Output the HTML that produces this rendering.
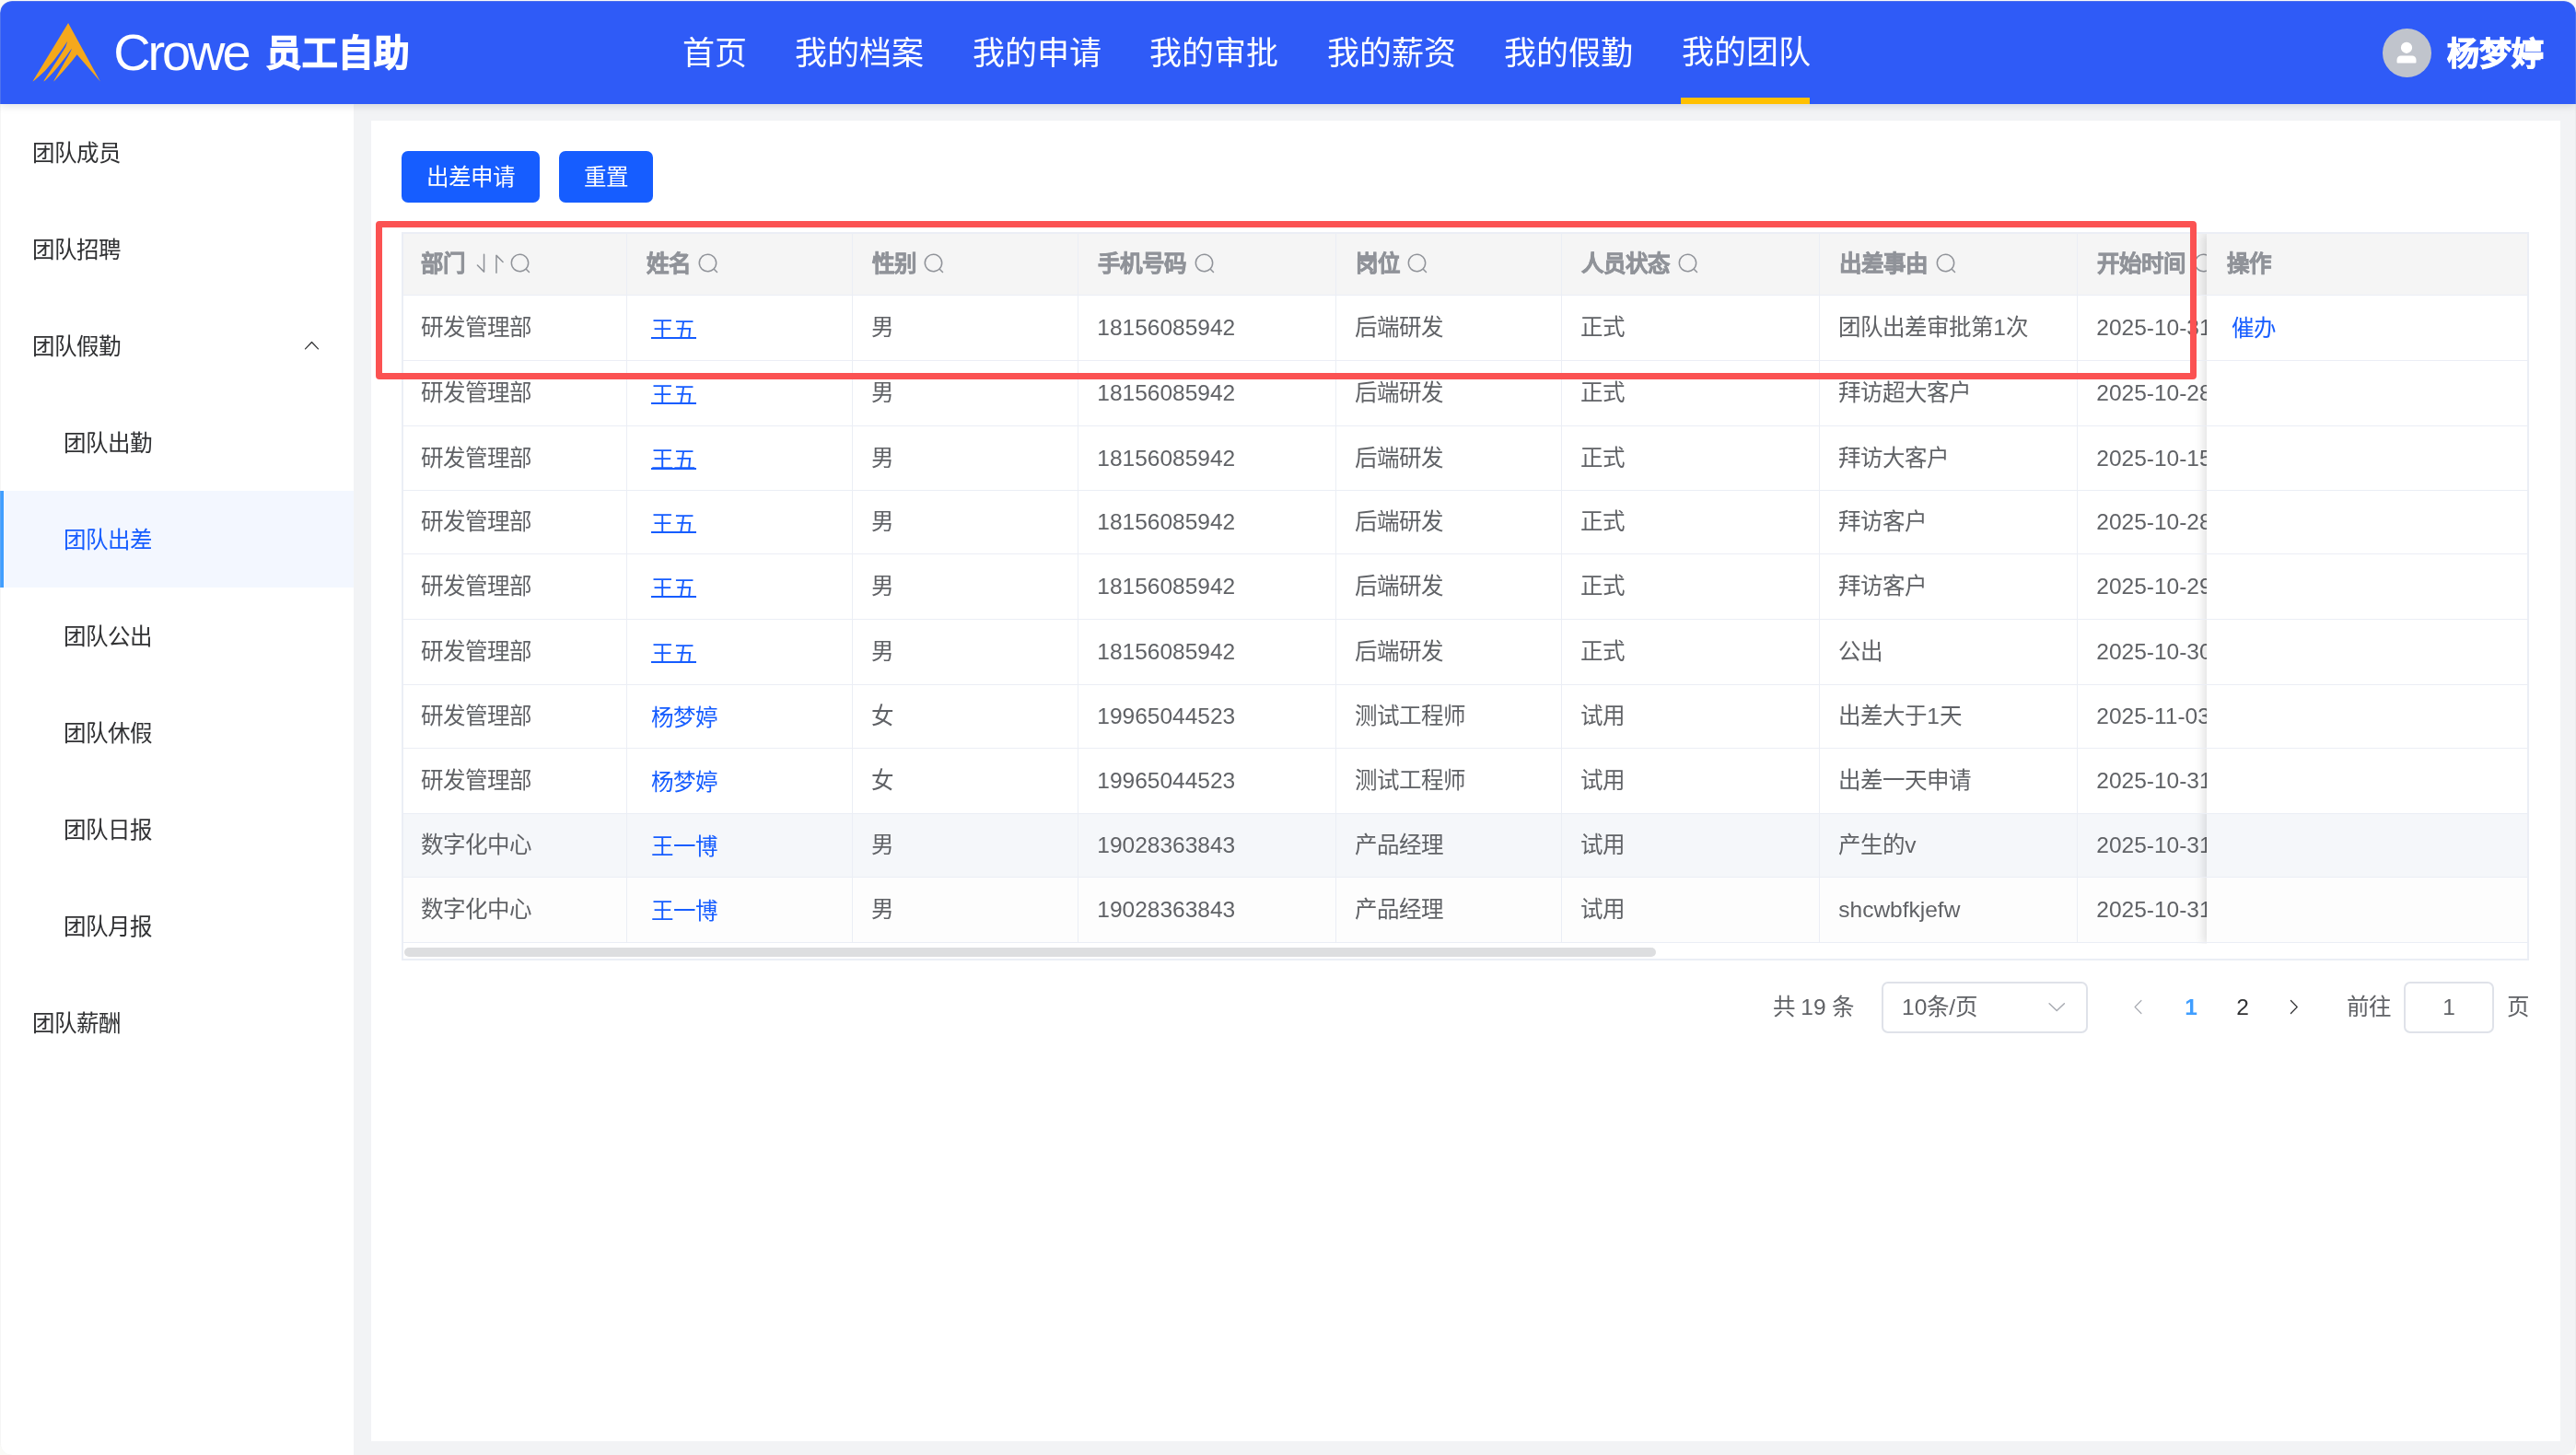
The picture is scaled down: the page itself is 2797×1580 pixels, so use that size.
<!DOCTYPE html>
<html lang="zh-CN">
<head>
<meta charset="utf-8">
<title>员工自助 - 团队出差</title>
<style>
html,body{margin:0;padding:0;background:#fafaf7;}
body{width:2797px;height:1580px;overflow:hidden;position:relative;font-family:"Liberation Sans",sans-serif;color:#606266;}
*{box-sizing:border-box;}
#app{will-change:transform;opacity:.9999;position:absolute;left:0;top:0;width:2797px;height:1580px;background:#f2f3f5;border-radius:13px;overflow:hidden;clip-path:inset(1px 0 0 0 round 13px);}
#edge{position:absolute;left:0;top:1px;width:2797px;height:1580px;border-radius:13px;box-shadow:inset 0 0 0 1px rgba(205,205,205,.2);z-index:100;pointer-events:none;}
.abs{position:absolute;}
.ic{position:absolute;display:block;overflow:visible;}
.t{position:absolute;white-space:nowrap;line-height:1;}
#hdr{position:absolute;left:0;top:0;width:2797px;height:113px;background:#2f5bf7;z-index:20;box-shadow:0 2px 9px rgba(0,21,41,.13);}
#hdr .nav{position:absolute;top:0;height:113px;font-size:35px;line-height:115px;color:#fff;white-space:nowrap;}
#side{position:absolute;left:0;top:113px;width:384px;height:1467px;background:#fff;z-index:5;}
.mi{position:absolute;left:0;width:384px;height:105px;line-height:107px;font-size:24.5px;color:#303133;white-space:nowrap;}
.mi.sub{padding-left:69px;}
.mi.top{padding-left:34.5px;}
.mi.act{background:#f3f7ff;color:#165dff;}
.mi.act:before{content:"";position:absolute;left:0;top:0;width:4px;height:105px;background:#409eff;}
#panel{position:absolute;left:403px;top:131px;width:2377px;height:1434px;background:#fff;}
.btn{position:absolute;top:164px;height:56px;border-radius:7px;background:#165dff;color:#fff;font-size:24.5px;line-height:58px;text-align:center;}
.hl{position:absolute;height:2px;background:#ebeef5;}
.hl.in{height:1px;}
.vl{position:absolute;width:2px;background:#ebeef5;}
.vl.in{width:1px;}
.c{position:absolute;font-size:24.5px;white-space:nowrap;color:#606266;}
.h{position:absolute;font-size:24.5px;font-weight:bold;white-space:nowrap;color:#909399;-webkit-text-stroke:.6px #909399;}
.lk{color:#165dff;}
.ul{position:absolute;height:2px;background:#165dff;}
.pg{position:absolute;font-size:24.5px;white-space:nowrap;line-height:56px;top:1066px;height:56px;color:#606266;}
.box{position:absolute;top:1066px;height:56px;border:2px solid #dfe2e9;border-radius:7px;background:#fff;}
</style>
</head>
<body>
<div id="app">

<div id="hdr">
<svg class="ic" style="left:30px;top:20px;width:85px;height:75px" viewBox="0 0 85 75"><path fill="#f5a81c" d="M44.07 4.90 L78.87 68.56 L53.61 39.18 L47.94 46.39 L39.18 56.70 L29.90 67.01 L28.35 68.56 L28.87 67.01 L31.96 61.86 L34.79 56.70 L37.89 51.55 L40.72 46.39 L43.81 41.24 L46.65 36.08 L48.20 32.47 L45.36 36.08 L41.75 41.24 L37.63 46.39 L33.76 51.55 L29.38 56.70 L24.74 61.86 L19.59 67.01 L17.42 68.56 L18.04 67.01 L21.39 61.86 L24.74 56.70 L28.09 51.55 L31.44 46.39 L34.79 41.24 L38.14 36.08 L41.24 30.93 L43.30 24.74 L41.24 27.84 L38.40 31.96 L35.57 36.08 L31.70 41.24 L27.84 46.39 L23.45 51.55 L19.07 56.70 L13.66 61.86 L7.73 67.01 L5.41 68.56 Z"/></svg>
<div class="t" id="crowe" style="left:123.2px;top:25.0px;font-size:56px;line-height:64px;letter-spacing:-3.1px;color:#fff;">Crowe</div>
<div class="t" id="ygzz" style="left:288.5px;top:25.5px;font-size:38.5px;line-height:64px;font-weight:bold;color:#fff;-webkit-text-stroke:1.4px #fff;">员工自助</div>
<div class="nav" style="left:740.5px;">首页</div>
<div class="nav" style="left:863px;">我的档案</div>
<div class="nav" style="left:1055.5px;">我的申请</div>
<div class="nav" style="left:1248px;">我的审批</div>
<div class="nav" style="left:1440.5px;">我的薪资</div>
<div class="nav" style="left:1633px;">我的假勤</div>
<div class="nav" style="left:1825.5px;margin-top:-1.5px;">我的团队</div>
<div class="abs" style="left:1825px;top:106px;width:140px;height:7px;background:#ffc000"></div>
<div class="abs" style="left:2587px;top:31px;width:53px;height:53px;border-radius:50%;background:#c0c4cc"></div>
<svg class="ic" style="left:2598.7px;top:43px;width:28px;height:28px;color:#fff;" viewBox="0 0 1024 1024"><path fill="currentColor" d="M288 320a224 224 0 1 0 448 0 224 224 0 1 0-448 0m544 608H160a32 32 0 0 1-32-32v-96a160 160 0 0 1 160-160h448a160 160 0 0 1 160 160v96a32 32 0 0 1-32 32z"/></svg>
<div class="t" id="uname" style="left:2656.5px;top:27px;font-size:35px;line-height:64px;font-weight:bold;color:#fff;-webkit-text-stroke:1.1px #fff;">杨梦婷</div>
</div>
<div id="side">
<div class="mi top" style="top:0px">团队成员</div>
<div class="mi top" style="top:105px">团队招聘</div>
<div class="mi top" style="top:210px">团队假勤</div>
<div class="mi sub" style="top:315px">团队出勤</div>
<div class="mi sub act" style="top:420px">团队出差</div>
<div class="mi sub" style="top:525px">团队公出</div>
<div class="mi sub" style="top:630px">团队休假</div>
<div class="mi sub" style="top:735px">团队日报</div>
<div class="mi sub" style="top:840px">团队月报</div>
<div class="mi top" style="top:945px">团队薪酬</div>
<svg class="ic" style="left:327.6px;top:251px;width:21px;height:21px;color:#303133;" viewBox="0 0 1024 1024"><path fill="currentColor" d="m488.832 344.32-339.84 356.672a32 32 0 0 0 0 44.16l.384.384a29.44 29.44 0 0 0 42.688 0l320-335.872 319.872 335.872a29.44 29.44 0 0 0 42.688 0l.384-.384a32 32 0 0 0 0-44.16L535.168 344.32a32 32 0 0 0-46.336 0"/></svg>
</div>
<div id="panel"></div>
<div class="btn" style="left:436px;width:150px;">出差申请</div>
<div class="btn" style="left:607px;width:102px;">重置</div>
<div id="tbl" class="abs" style="left:436px;top:252px;width:2310px;height:791px;">
<div class="abs" style="left:0;top:0;width:2310px;height:68px;background:#f5f5f5"></div>
<div class="abs" style="left:0;top:632px;width:2310px;height:68px;background:#f5f7fa"></div>
<div class="abs" style="left:0;top:701px;width:2310px;height:70px;background:#fdfdfd"></div>
<div class="abs" style="left:0;top:0;width:1960px;height:772px;overflow:hidden;">
<div class="vl in" style="left:244px;top:0;height:771px"></div>
<div class="vl in" style="left:489px;top:0;height:771px"></div>
<div class="vl in" style="left:734px;top:0;height:771px"></div>
<div class="vl in" style="left:1014px;top:0;height:771px"></div>
<div class="vl in" style="left:1259px;top:0;height:771px"></div>
<div class="vl in" style="left:1539px;top:0;height:771px"></div>
<div class="vl in" style="left:1819px;top:0;height:771px"></div>
<div class="h" style="left:20.8px;top:15.0px;line-height:40px">部门</div>
<svg class="ic" style="left:75.0px;top:21.600000000000023px;width:24.5px;height:24.5px;color:#909399;" viewBox="0 0 1024 1024"><path fill="currentColor" d="M576 96v709.568L333.312 562.816A32 32 0 1 0 288 608l297.408 297.344A32 32 0 0 0 640 882.688V96a32 32 0 0 0-64 0"/></svg>
<svg class="ic" style="left:93.0px;top:21.600000000000023px;width:24.5px;height:24.5px;color:#909399;" viewBox="0 0 1024 1024"><path fill="currentColor" d="M384 141.248V928a32 32 0 1 0 64 0V218.56l242.688 242.688A32 32 0 1 0 736 416L438.592 118.656A32 32 0 0 0 384 141.312z"/></svg>
<svg class="ic" style="left:117.0px;top:21.600000000000023px;width:24.5px;height:24.5px;color:#909399;" viewBox="0 0 1024 1024"><path fill="currentColor" d="m795.904 750.72 124.992 124.928a32 32 0 0 1-45.248 45.248L750.656 795.904a416 416 0 1 1 45.248-45.248zM480 832a352 352 0 1 0 0-704 352 352 0 0 0 0 704"/></svg>
<div class="h" style="left:265.6px;top:15.0px;line-height:40px">姓名</div>
<svg class="ic" style="left:320.5px;top:21.600000000000023px;width:24.5px;height:24.5px;color:#909399;" viewBox="0 0 1024 1024"><path fill="currentColor" d="m795.904 750.72 124.992 124.928a32 32 0 0 1-45.248 45.248L750.656 795.904a416 416 0 1 1 45.248-45.248zM480 832a352 352 0 1 0 0-704 352 352 0 0 0 0 704"/></svg>
<div class="h" style="left:510.6px;top:15.0px;line-height:40px">性别</div>
<svg class="ic" style="left:565.5px;top:21.600000000000023px;width:24.5px;height:24.5px;color:#909399;" viewBox="0 0 1024 1024"><path fill="currentColor" d="m795.904 750.72 124.992 124.928a32 32 0 0 1-45.248 45.248L750.656 795.904a416 416 0 1 1 45.248-45.248zM480 832a352 352 0 1 0 0-704 352 352 0 0 0 0 704"/></svg>
<div class="h" style="left:755.6px;top:15.0px;line-height:40px">手机号码</div>
<svg class="ic" style="left:859.5px;top:21.600000000000023px;width:24.5px;height:24.5px;color:#909399;" viewBox="0 0 1024 1024"><path fill="currentColor" d="m795.904 750.72 124.992 124.928a32 32 0 0 1-45.248 45.248L750.656 795.904a416 416 0 1 1 45.248-45.248zM480 832a352 352 0 1 0 0-704 352 352 0 0 0 0 704"/></svg>
<div class="h" style="left:1035.6px;top:15.0px;line-height:40px">岗位</div>
<svg class="ic" style="left:1090.5px;top:21.600000000000023px;width:24.5px;height:24.5px;color:#909399;" viewBox="0 0 1024 1024"><path fill="currentColor" d="m795.904 750.72 124.992 124.928a32 32 0 0 1-45.248 45.248L750.656 795.904a416 416 0 1 1 45.248-45.248zM480 832a352 352 0 1 0 0-704 352 352 0 0 0 0 704"/></svg>
<div class="h" style="left:1280.6px;top:15.0px;line-height:40px">人员状态</div>
<svg class="ic" style="left:1384.5px;top:21.600000000000023px;width:24.5px;height:24.5px;color:#909399;" viewBox="0 0 1024 1024"><path fill="currentColor" d="m795.904 750.72 124.992 124.928a32 32 0 0 1-45.248 45.248L750.656 795.904a416 416 0 1 1 45.248-45.248zM480 832a352 352 0 1 0 0-704 352 352 0 0 0 0 704"/></svg>
<div class="h" style="left:1560.6px;top:15.0px;line-height:40px">出差事由</div>
<svg class="ic" style="left:1664.5px;top:21.600000000000023px;width:24.5px;height:24.5px;color:#909399;" viewBox="0 0 1024 1024"><path fill="currentColor" d="m795.904 750.72 124.992 124.928a32 32 0 0 1-45.248 45.248L750.656 795.904a416 416 0 1 1 45.248-45.248zM480 832a352 352 0 1 0 0-704 352 352 0 0 0 0 704"/></svg>
<div class="h" style="left:1840.6px;top:15.0px;line-height:40px">开始时间</div>
<svg class="ic" style="left:1944.5px;top:21.600000000000023px;width:24.5px;height:24.5px;color:#909399;" viewBox="0 0 1024 1024"><path fill="currentColor" d="m795.904 750.72 124.992 124.928a32 32 0 0 1-45.248 45.248L750.656 795.904a416 416 0 1 1 45.248-45.248zM480 832a352 352 0 1 0 0-704 352 352 0 0 0 0 704"/></svg>
<div class="c" style="left:20.5px;top:84.0px;line-height:40px">研发管理部</div>
<div class="ul" style="left:270.8px;top:114.0px;width:49.5px"></div>
<div class="c lk" style="left:271.3px;top:86.7px;line-height:40px">王五</div>
<div class="c" style="left:510.3px;top:84.0px;line-height:40px">男</div>
<div class="c" style="left:755.3px;top:84.0px;line-height:40px">18156085942</div>
<div class="c" style="left:1035.3px;top:84.0px;line-height:40px">后端研发</div>
<div class="c" style="left:1280.3px;top:84.0px;line-height:40px">正式</div>
<div class="c" style="left:1560.3px;top:84.0px;line-height:40px">团队出差审批第1次</div>
<div class="c" style="left:1840.3px;top:84.0px;line-height:40px">2025-10-31</div>
<div class="c" style="left:20.5px;top:155.0px;line-height:40px">研发管理部</div>
<div class="ul" style="left:270.8px;top:185.0px;width:49.5px"></div>
<div class="c lk" style="left:271.3px;top:157.7px;line-height:40px">王五</div>
<div class="c" style="left:510.3px;top:155.0px;line-height:40px">男</div>
<div class="c" style="left:755.3px;top:155.0px;line-height:40px">18156085942</div>
<div class="c" style="left:1035.3px;top:155.0px;line-height:40px">后端研发</div>
<div class="c" style="left:1280.3px;top:155.0px;line-height:40px">正式</div>
<div class="c" style="left:1560.3px;top:155.0px;line-height:40px">拜访超大客户</div>
<div class="c" style="left:1840.3px;top:155.0px;line-height:40px">2025-10-28</div>
<div class="c" style="left:20.5px;top:225.5px;line-height:40px">研发管理部</div>
<div class="ul" style="left:270.8px;top:255.5px;width:49.5px"></div>
<div class="c lk" style="left:271.3px;top:228.2px;line-height:40px">王五</div>
<div class="c" style="left:510.3px;top:225.5px;line-height:40px">男</div>
<div class="c" style="left:755.3px;top:225.5px;line-height:40px">18156085942</div>
<div class="c" style="left:1035.3px;top:225.5px;line-height:40px">后端研发</div>
<div class="c" style="left:1280.3px;top:225.5px;line-height:40px">正式</div>
<div class="c" style="left:1560.3px;top:225.5px;line-height:40px">拜访大客户</div>
<div class="c" style="left:1840.3px;top:225.5px;line-height:40px">2025-10-15</div>
<div class="c" style="left:20.5px;top:295.0px;line-height:40px">研发管理部</div>
<div class="ul" style="left:270.8px;top:325.0px;width:49.5px"></div>
<div class="c lk" style="left:271.3px;top:297.7px;line-height:40px">王五</div>
<div class="c" style="left:510.3px;top:295.0px;line-height:40px">男</div>
<div class="c" style="left:755.3px;top:295.0px;line-height:40px">18156085942</div>
<div class="c" style="left:1035.3px;top:295.0px;line-height:40px">后端研发</div>
<div class="c" style="left:1280.3px;top:295.0px;line-height:40px">正式</div>
<div class="c" style="left:1560.3px;top:295.0px;line-height:40px">拜访客户</div>
<div class="c" style="left:1840.3px;top:295.0px;line-height:40px">2025-10-28</div>
<div class="c" style="left:20.5px;top:365.0px;line-height:40px">研发管理部</div>
<div class="ul" style="left:270.8px;top:395.0px;width:49.5px"></div>
<div class="c lk" style="left:271.3px;top:367.7px;line-height:40px">王五</div>
<div class="c" style="left:510.3px;top:365.0px;line-height:40px">男</div>
<div class="c" style="left:755.3px;top:365.0px;line-height:40px">18156085942</div>
<div class="c" style="left:1035.3px;top:365.0px;line-height:40px">后端研发</div>
<div class="c" style="left:1280.3px;top:365.0px;line-height:40px">正式</div>
<div class="c" style="left:1560.3px;top:365.0px;line-height:40px">拜访客户</div>
<div class="c" style="left:1840.3px;top:365.0px;line-height:40px">2025-10-29</div>
<div class="c" style="left:20.5px;top:436.0px;line-height:40px">研发管理部</div>
<div class="ul" style="left:270.8px;top:466.0px;width:49.5px"></div>
<div class="c lk" style="left:271.3px;top:438.7px;line-height:40px">王五</div>
<div class="c" style="left:510.3px;top:436.0px;line-height:40px">男</div>
<div class="c" style="left:755.3px;top:436.0px;line-height:40px">18156085942</div>
<div class="c" style="left:1035.3px;top:436.0px;line-height:40px">后端研发</div>
<div class="c" style="left:1280.3px;top:436.0px;line-height:40px">正式</div>
<div class="c" style="left:1560.3px;top:436.0px;line-height:40px">公出</div>
<div class="c" style="left:1840.3px;top:436.0px;line-height:40px">2025-10-30</div>
<div class="c" style="left:20.5px;top:506.0px;line-height:40px">研发管理部</div>
<div class="c lk" style="left:271.3px;top:507.6px;line-height:40px">杨梦婷</div>
<div class="c" style="left:510.3px;top:506.0px;line-height:40px">女</div>
<div class="c" style="left:755.3px;top:506.0px;line-height:40px">19965044523</div>
<div class="c" style="left:1035.3px;top:506.0px;line-height:40px">测试工程师</div>
<div class="c" style="left:1280.3px;top:506.0px;line-height:40px">试用</div>
<div class="c" style="left:1560.3px;top:506.0px;line-height:40px">出差大于1天</div>
<div class="c" style="left:1840.3px;top:506.0px;line-height:40px">2025-11-03</div>
<div class="c" style="left:20.5px;top:576.0px;line-height:40px">研发管理部</div>
<div class="c lk" style="left:271.3px;top:577.6px;line-height:40px">杨梦婷</div>
<div class="c" style="left:510.3px;top:576.0px;line-height:40px">女</div>
<div class="c" style="left:755.3px;top:576.0px;line-height:40px">19965044523</div>
<div class="c" style="left:1035.3px;top:576.0px;line-height:40px">测试工程师</div>
<div class="c" style="left:1280.3px;top:576.0px;line-height:40px">试用</div>
<div class="c" style="left:1560.3px;top:576.0px;line-height:40px">出差一天申请</div>
<div class="c" style="left:1840.3px;top:576.0px;line-height:40px">2025-10-31</div>
<div class="c" style="left:20.5px;top:646.0px;line-height:40px">数字化中心</div>
<div class="c lk" style="left:271.3px;top:647.6px;line-height:40px">王一博</div>
<div class="c" style="left:510.3px;top:646.0px;line-height:40px">男</div>
<div class="c" style="left:755.3px;top:646.0px;line-height:40px">19028363843</div>
<div class="c" style="left:1035.3px;top:646.0px;line-height:40px">产品经理</div>
<div class="c" style="left:1280.3px;top:646.0px;line-height:40px">试用</div>
<div class="c" style="left:1560.3px;top:646.0px;line-height:40px">产生的v</div>
<div class="c" style="left:1840.3px;top:646.0px;line-height:40px">2025-10-31</div>
<div class="c" style="left:20.5px;top:716.0px;line-height:40px">数字化中心</div>
<div class="c lk" style="left:271.3px;top:717.6px;line-height:40px">王一博</div>
<div class="c" style="left:510.3px;top:716.0px;line-height:40px">男</div>
<div class="c" style="left:755.3px;top:716.0px;line-height:40px">19028363843</div>
<div class="c" style="left:1035.3px;top:716.0px;line-height:40px">产品经理</div>
<div class="c" style="left:1280.3px;top:716.0px;line-height:40px">试用</div>
<div class="c" style="left:1560.3px;top:716.0px;line-height:40px">shcwbfkjefw</div>
<div class="c" style="left:1840.3px;top:716.0px;line-height:40px">2025-10-31</div>
</div>
<div class="abs" style="left:1960px;top:2px;width:348px;height:771px;box-shadow:-3px 0 10px rgba(0,0,0,.13);clip-path:inset(0 0 0 -14px);">
<div class="abs" style="left:0;top:0;width:100%;height:66px;background:#f5f5f5"></div>
<div class="abs" style="left:0;top:67px;width:100%;height:70px;background:#fff"></div>
<div class="abs" style="left:0;top:138px;width:100%;height:70px;background:#fff"></div>
<div class="abs" style="left:0;top:209px;width:100%;height:69px;background:#fff"></div>
<div class="abs" style="left:0;top:279px;width:100%;height:68px;background:#fff"></div>
<div class="abs" style="left:0;top:348px;width:100%;height:70px;background:#fff"></div>
<div class="abs" style="left:0;top:419px;width:100%;height:70px;background:#fff"></div>
<div class="abs" style="left:0;top:490px;width:100%;height:68px;background:#fff"></div>
<div class="abs" style="left:0;top:559px;width:100%;height:70px;background:#fff"></div>
<div class="abs" style="left:0;top:630px;width:100%;height:68px;background:#f5f7fa"></div>
<div class="abs" style="left:0;top:699px;width:100%;height:70px;background:#fdfdfd"></div>
</div>
<div class="h" style="left:1981.5px;top:15.0px;line-height:40px">操作</div>
<div class="c lk" style="left:1986.5px;top:84.9px;line-height:40px">催办</div>
<div class="hl in" style="left:0;top:68px;width:2310px"></div>
<div class="hl in" style="left:0;top:139px;width:2310px"></div>
<div class="hl in" style="left:0;top:210px;width:2310px"></div>
<div class="hl in" style="left:0;top:280px;width:2310px"></div>
<div class="hl in" style="left:0;top:349px;width:2310px"></div>
<div class="hl in" style="left:0;top:420px;width:2310px"></div>
<div class="hl in" style="left:0;top:491px;width:2310px"></div>
<div class="hl in" style="left:0;top:560px;width:2310px"></div>
<div class="hl in" style="left:0;top:631px;width:2310px"></div>
<div class="hl in" style="left:0;top:700px;width:2310px"></div>
<div class="hl in" style="left:0;top:771px;width:2310px"></div>
<div class="hl" style="left:0;top:0;width:2310px"></div>
<div class="hl" style="left:0;top:789px;width:2310px"></div>
<div class="vl" style="left:0;top:0;height:791px"></div>
<div class="vl" style="left:2308px;top:0;height:791px"></div>
<div class="abs" style="left:3px;top:777px;width:1359px;height:10px;border-radius:5px;background:#dddee0"></div>
</div>
<div class="abs" style="left:408px;top:240px;width:1977px;height:172px;border:7px solid #fb5252;border-radius:4px;z-index:8"></div>
<div class="pg" style="left:1924.5px">共 19 条</div>
<div class="box" style="left:2043px;width:224px"></div>
<div class="pg" style="left:2065px">10条/页</div>
<svg class="ic" style="left:2221px;top:1081.4px;width:24.5px;height:24.5px;color:#a8abb2;" viewBox="0 0 1024 1024"><path fill="currentColor" d="M831.872 340.864 512 652.672 192.128 340.864a30.592 30.592 0 0 0-42.752 0 29.12 29.12 0 0 0 0 41.6L489.664 714.24a32 32 0 0 0 44.672 0l340.288-331.712a29.12 29.12 0 0 0 0-41.728 30.592 30.592 0 0 0-42.752 0z"/></svg>
<svg class="ic" style="left:2311.5px;top:1083px;width:21px;height:21px;color:#a8abb2;" viewBox="0 0 1024 1024"><path fill="currentColor" d="M609.408 149.376 277.76 489.6a32 32 0 0 0 0 44.672l331.648 340.352a29.12 29.12 0 0 0 41.728 0 30.592 30.592 0 0 0 0-42.752L339.264 511.936l311.872-319.872a30.592 30.592 0 0 0 0-42.688 29.12 29.12 0 0 0-41.728 0z"/></svg>
<div class="pg" style="left:2351px;width:56px;text-align:center;color:#409eff;font-weight:bold">1</div>
<div class="pg" style="left:2407px;width:56px;text-align:center;color:#303133">2</div>
<svg class="ic" style="left:2480px;top:1083px;width:21px;height:21px;color:#303133;" viewBox="0 0 1024 1024"><path fill="currentColor" d="M340.864 149.312a30.592 30.592 0 0 0 0 42.752L652.736 512 340.864 831.872a30.592 30.592 0 0 0 0 42.752 29.12 29.12 0 0 0 41.728 0L714.24 534.336a32 32 0 0 0 0-44.672L382.592 149.376a29.12 29.12 0 0 0-41.728 0z"/></svg>
<div class="pg" style="left:2547.5px">前往</div>
<div class="box" style="left:2610px;width:98px"></div>
<div class="pg" style="left:2610px;width:98px;text-align:center">1</div>
<div class="pg" style="left:2722px">页</div>
<div id="edge"></div>
</div>
</body>
</html>
